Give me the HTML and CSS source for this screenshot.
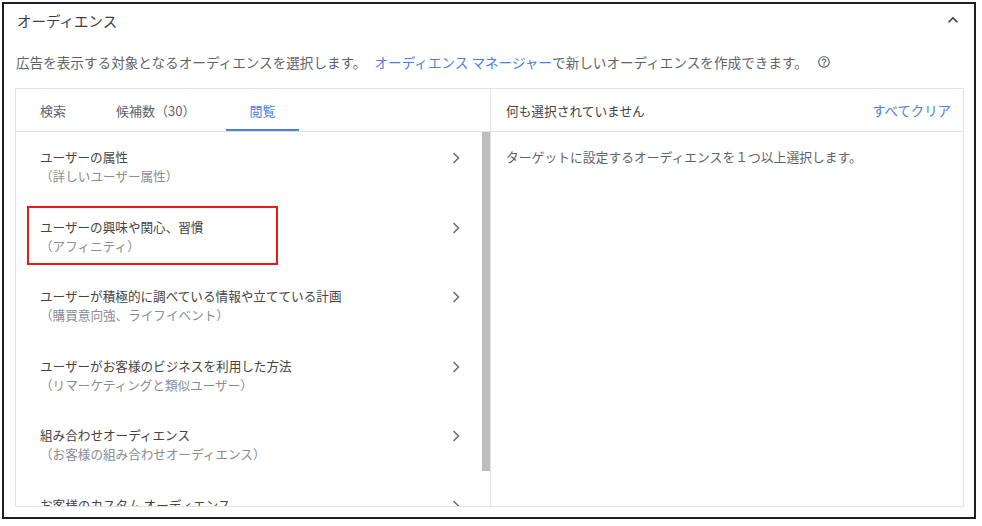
FILE: index.html
```html
<!DOCTYPE html>
<html lang="ja">
<head>
<meta charset="utf-8">
<link rel="stylesheet" href="styles.css">
</head>
<body>
<section class="card">
  <header class="card-head">
    <h2 class="card-title">オーディエンス</h2>
    <svg class="collapse" viewBox="0 0 24 24" width="20" height="20"><path d="M12 8l-6 6 1.41 1.41L12 10.83l4.59 4.58L18 14z"/></svg>
  </header>
  <p class="desc">広告を表示する対象となるオーディエンスを選択します。<span class="sp"></span><a class="link">オーディエンス マネージャー</a>で新しいオーディエンスを作成できます。<svg class="help" viewBox="0 0 24 24" width="14" height="14"><path d="M11 18h2v-2h-2v2zm1-16C6.480 2 2 6.48 2 12s4.48 10 10 10 10-4.48 10-10S17.52 2 12 2zm0 18c-4.41 0-8-3.59-8-8s3.59-8 8-8 8 3.59 8 8-3.59 8-8 8zm0-14c-2.21 0-4 1.79-4 4h2c0-1.1.9-2 2-2s2 .9 2 2c0 2-3 1.75-3 5h2c0-2.25 3-2.5 3-5 0-2.21-1.79-4-4-4z"/></svg></p>

  <div class="panel">
    <div class="left">
      <nav class="tabs">
        <span class="tab t1">検索</span>
        <span class="tab t2">候補数（30）</span>
        <span class="tab active">閲覧</span>
      </nav>
      <div class="list-wrap">
        <ul class="list">
          <li class="item">
            <div class="item-text"><div class="item-title">ユーザーの属性</div><div class="item-sub">（詳しいユーザー属性）</div></div>
            <svg class="chev" viewBox="0 0 8 12" width="8" height="12"><polyline points="1.5,1 6.5,6 1.5,11"/></svg>
          </li>
          <li class="item">
            <div class="item-text"><div class="item-title">ユーザーの興味や関心、習慣</div><div class="item-sub">（アフィニティ）</div></div>
            <span class="highlight"></span>
            <svg class="chev" viewBox="0 0 8 12" width="8" height="12"><polyline points="1.5,1 6.5,6 1.5,11"/></svg>
          </li>
          <li class="item">
            <div class="item-text"><div class="item-title">ユーザーが積極的に調べている情報や立てている計画</div><div class="item-sub">（購買意向強、ライフイベント）</div></div>
            <svg class="chev" viewBox="0 0 8 12" width="8" height="12"><polyline points="1.5,1 6.5,6 1.5,11"/></svg>
          </li>
          <li class="item">
            <div class="item-text"><div class="item-title">ユーザーがお客様のビジネスを利用した方法</div><div class="item-sub">（リマーケティングと類似ユーザー）</div></div>
            <svg class="chev" viewBox="0 0 8 12" width="8" height="12"><polyline points="1.5,1 6.5,6 1.5,11"/></svg>
          </li>
          <li class="item">
            <div class="item-text"><div class="item-title">組み合わせオーディエンス</div><div class="item-sub">（お客様の組み合わせオーディエンス）</div></div>
            <svg class="chev" viewBox="0 0 8 12" width="8" height="12"><polyline points="1.5,1 6.5,6 1.5,11"/></svg>
          </li>
          <li class="item">
            <div class="item-text"><div class="item-title">お客様のカスタム オーディエンス</div><div class="item-sub">（カスタム オーディエンス）</div></div>
            <svg class="chev" viewBox="0 0 8 12" width="8" height="12"><polyline points="1.5,1 6.5,6 1.5,11"/></svg>
          </li>
        </ul>
        <div class="scrollbar"><div class="thumb"></div></div>
      </div>
    </div>
    <div class="right">
      <div class="right-head">
        <span class="none">何も選択されていません</span>
        <a class="link clear">すべてクリア</a>
      </div>
      <p class="hint">ターゲットに設定するオーディエンスを１つ以上選択します。</p>
    </div>
  </div>
</section>
</body>
</html>
```

FILE: styles.css
```css
* { box-sizing: border-box; }
html, body { margin: 0; padding: 0; background: #fff; }
body {
  padding: 2px 0 0 2px;
  font-family: "Noto Sans CJK JP", "Noto Sans", sans-serif;
  color: #3c4043;
}
.card {
  width: 974px;
  height: 517px;
  border: 2px solid #1f1f1f;
  padding: 0 10px 0 11px;
  display: flex;
  flex-direction: column;
}
.card-head {
  height: 32px;
  display: flex;
  align-items: center;
  justify-content: space-between;
}
.card-title {
  margin: 0 0 0 2px;
  font-size: 14.5px;
  font-weight: 400;
  color: #3c4043;
}
.collapse { fill: #3c4043; margin-right: 1px; }
.desc {
  margin: 16px 0 0 1px;
  height: 20px;
  line-height: 20px;
  font-size: 13.6px;
  color: #5f6368;
  display: flex;
  align-items: center;
  white-space: nowrap;
}
.sp { display: inline-block; width: 8px; }
.link { color: #4a80e6; text-decoration: none; cursor: pointer; }
.help { fill: #5f6368; margin-left: 9px; }
.panel {
  margin-top: 16px;
  height: 419px;
  border: 1px solid #e2e2e2;
  display: flex;
  overflow: hidden;
}
.left {
  width: 475px;
  border-right: 1px solid #e2e2e2;
  display: flex;
  flex-direction: column;
}
.tabs {
  height: 43px;
  border-bottom: 1px solid #e2e2e2;
  display: flex;
}
.tab {
  padding: 2px 24px 0;
  font-size: 13px;
  color: #5f6368;
  display: flex;
  align-items: center;
  border-bottom: 2px solid transparent;
}
.tab.t1 { padding-right: 26px; }
.tab.t2 { padding-right: 31px; }
.tab.active { color: #4a80e6; border-bottom-color: #4a80e6; padding-left: 23px; }
.list-wrap { flex: 1; display: flex; min-height: 0; }
.list { flex: 1; margin: 0; padding: 0; list-style: none; }
.item {
  position: relative;
  height: 69.5px;
  padding: 15px 22px 0 24px;
  display: flex;
  justify-content: space-between;
  align-items: flex-start;
}
.item-title { font-size: 12.6px; line-height: 19px; color: #444; }
.item-sub { font-size: 12.6px; line-height: 19px; color: #8a8d91; }
.chev { margin-top: 5px; fill: none; stroke: #6b6b6b; stroke-width: 1.5; }
.highlight {
  position: absolute;
  left: 11px;
  top: 4px;
  width: 251px;
  height: 59px;
  border: 2px solid #e8191b;
}
.scrollbar { width: 8px; }
.thumb { height: 339px; background: #bdbdbd; }
.right { flex: 1; display: flex; flex-direction: column; }
.right-head {
  height: 43px;
  border-bottom: 1px solid #e2e2e2;
  padding: 0 12px 0 15px;
  display: flex;
  align-items: center;
  justify-content: space-between;
  font-size: 12.7px;
}
.clear { font-size: 13.4px; }
.none { color: #444; }
.hint { margin: 15px 0 0 15px; font-size: 12.8px; line-height: 19px; color: #5f6368; }
```
